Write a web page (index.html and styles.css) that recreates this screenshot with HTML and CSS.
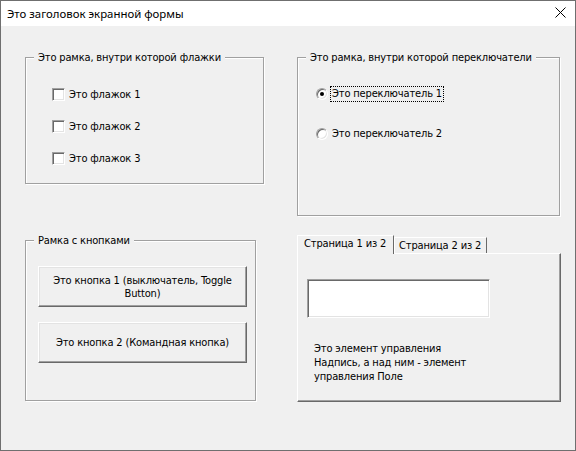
FILE: index.html
```html
<!DOCTYPE html>
<html lang="ru">
<head>
<meta charset="utf-8">
<title>Форма</title>
<link rel="stylesheet" href="styles.css">
</head>
<body>
<div class="window">
  <div class="titlebar">
    <span class="title">Это заголовок экранной формы</span>
    <svg class="close" width="11" height="11" viewBox="0 0 11 11"><path d="M0.5 0.5 L10.5 10.5 M10.5 0.5 L0.5 10.5" stroke="#000" stroke-width="1" fill="none"/></svg>
  </div>
  <div class="client">
    <div class="col col-left">
      <div class="frame frame-checks">
        <div class="legend">Это рамка, внутри которой флажки</div>
        <div class="checks">
          <label class="check"><span class="box"></span><span>Это флажок 1</span></label>
          <label class="check"><span class="box"></span><span>Это флажок 2</span></label>
          <label class="check"><span class="box"></span><span>Это флажок 3</span></label>
        </div>
      </div>
      <div class="frame frame-buttons">
        <div class="legend">Рамка с кнопками</div>
        <div class="buttons">
          <div class="btn">Это кнопка 1 (выключатель, Toggle<br>Button)</div>
          <div class="btn">Это кнопка 2 (Командная кнопка)</div>
        </div>
      </div>
    </div>
    <div class="col col-right">
      <div class="frame frame-radios">
        <div class="legend">Это рамка, внутри которой переключатели</div>
        <div class="radios">
          <label class="radio"><span class="circle checked"></span><span class="rtext focus">Это переключатель 1</span></label>
          <label class="radio"><span class="circle"></span><span class="rtext">Это переключатель 2</span></label>
        </div>
      </div>
      <div class="tabctl">
        <div class="tabs">
          <div class="tab active">Страница 1 из 2</div>
          <div class="tab">Страница 2 из 2</div>
        </div>
        <div class="panel">
          <div class="textbox"></div>
          <div class="caption">Это элемент управления<br>Надпись, а над ним - элемент<br>управления Поле</div>
        </div>
      </div>
    </div>
  </div>
</div>
</body>
</html>
```
FILE: styles.css
```css
html, body {
  margin: 0;
  padding: 0;
  background: #f0f0f0;
}

.window {
  width: 576px;
  height: 451px;
  box-sizing: border-box;
  border: 1px solid #6f6f6f;
  background: #f0f0f0;
  display: flex;
  flex-direction: column;
  font-family: "DejaVu Sans Condensed", "DejaVu Sans", sans-serif;
  font-stretch: condensed;
  font-size: 11px;
  letter-spacing: -0.15px;
  color: #000;
}

.titlebar {
  height: 25px;
  background: #fff;
  display: flex;
  align-items: center;
  justify-content: space-between;
  padding: 0 9px 0 6px;
  flex: none;
}

.title {
  font-family: "Noto Sans", sans-serif;
  font-stretch: normal;
  font-size: 11.4px;
  letter-spacing: 0;
  line-height: 16px;
}

.close {
  display: block;
  margin-top: -3px;
}

.client {
  flex: 1;
  display: grid;
  grid-template-columns: 272px 264px;
  padding: 31px 0 0 24px;
  align-items: start;
}

.col {
  display: flex;
  flex-direction: column;
}

.frame {
  border: 1px solid #a0a0a0;
  box-shadow: inset 1px 1px 0 #fff, 1px 1px 0 #fff;
  box-sizing: border-box;
}

.legend {
  width: fit-content;
  height: 13px;
  line-height: 13px;
  margin: -7px 0 0 8px;
  padding: 0 4px;
  background: #f0f0f0;
  white-space: nowrap;
}

.frame-checks {
  width: 239px;
  height: 127px;
}

.checks {
  display: flex;
  flex-direction: column;
  padding: 14px 0 0 26px;
}

.check {
  height: 32px;
  display: flex;
  align-items: center;
  gap: 4px;
}

.box {
  width: 13px;
  height: 13px;
  box-sizing: border-box;
  background: #fff;
  border: 1px solid;
  border-color: #a0a0a0 #fff #fff #a0a0a0;
  box-shadow: inset 1px 1px 0 #696969, inset -1px -1px 0 #e3e3e3;
}

.frame-buttons {
  width: 231px;
  height: 161px;
  margin-top: 56px;
}

.buttons {
  display: flex;
  flex-direction: column;
  gap: 15px;
  padding: 19px 0 0 12px;
}

.btn {
  width: 209px;
  height: 41px;
  box-sizing: border-box;
  border: 1px solid;
  border-color: #fff #696969 #696969 #fff;
  box-shadow: inset -1px -1px 0 #a0a0a0, inset 1px 1px 0 #e3e3e3;
  display: flex;
  align-items: center;
  justify-content: center;
  text-align: center;
  line-height: 13px;
  background: #f0f0f0;
}

.frame-radios {
  width: 263px;
  height: 159px;
}

.radios {
  display: flex;
  flex-direction: column;
  gap: 20px;
  padding: 20px 0 0 18px;
}

.radio {
  height: 20px;
  display: flex;
  align-items: center;
  gap: 2px;
}

.circle {
  width: 12px;
  height: 12px;
  box-sizing: border-box;
  border-radius: 50%;
  background: #fff;
  border: 1px solid;
  border-color: #a0a0a0 #fff #fff #a0a0a0;
  box-shadow: inset 1px 1px 0 #696969, inset -1px -1px 0 #e3e3e3;
  display: flex;
  align-items: center;
  justify-content: center;
}

.circle.checked::after {
  content: "";
  width: 4px;
  height: 4px;
  border-radius: 50%;
  background: #000;
}

.rtext {
  padding: 0 1px 1px 1px;
  border: 1px solid transparent;
  line-height: 13px;
}

.rtext.focus {
  border: 1px dotted #000;
}

.tabctl {
  margin-top: 19px;
  width: 264px;
}

.tabs {
  display: flex;
  align-items: flex-end;
  height: 18px;
}

.tab {
  box-sizing: border-box;
  height: 16px;
  padding: 0 5px 0 4px;
  border: 1px solid;
  border-color: #fff #696969 transparent #fff;
  border-bottom: none;
  line-height: 15px;
  white-space: nowrap;
}

.tab.active {
  height: 19px;
  width: 97px;
  margin-bottom: -1px;
  padding: 0 6px;
  line-height: 15px;
  position: relative;
  z-index: 1;
  background: #f0f0f0;
}

.tab:not(.active) {
  width: 93px;
}

.panel {
  height: 149px;
  box-sizing: border-box;
  border: 1px solid;
  border-color: #fff #696969 #696969 #fff;
  box-shadow: inset -1px -1px 0 #a0a0a0;
  padding: 25px 0 0 9px;
}

.textbox {
  width: 183px;
  height: 39px;
  box-sizing: border-box;
  background: #fff;
  border: 1px solid;
  border-color: #a0a0a0 #fff #fff #a0a0a0;
  box-shadow: inset 1px 1px 0 #696969, inset -1px -1px 0 #e3e3e3;
}

.caption {
  margin: 24px 0 0 7px;
  line-height: 14px;
}
```
